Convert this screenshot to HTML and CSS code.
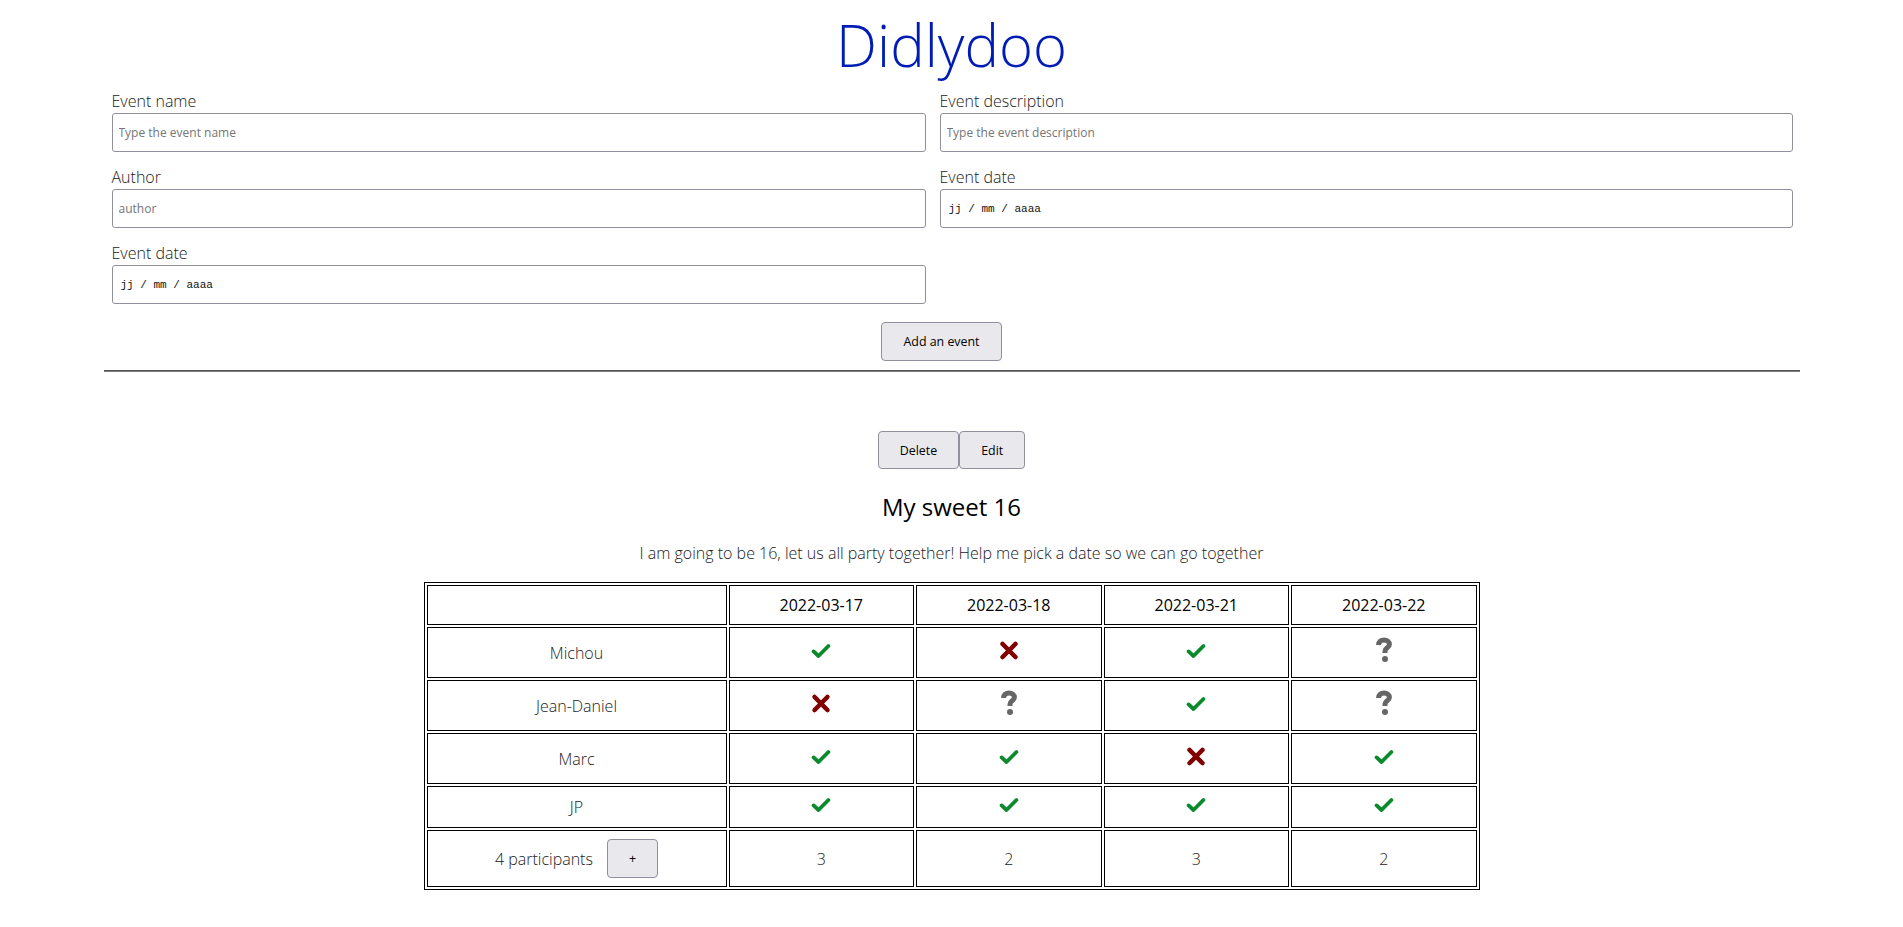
FILE: index.html
```html
<!DOCTYPE html>
<html lang="en">
<head>
<meta charset="utf-8">
<title>Didlydoo</title>
<link rel="stylesheet" href="styles.css">
</head>
<body>
<div class="page">
  <h1 class="title">Didlydoo</h1>
  <form class="event-form">
    <div class="fields">
      <div class="field">
        <label class="field-label">Event name</label>
        <input class="field-input" type="text" placeholder="Type the event name">
      </div>
      <div class="field">
        <label class="field-label">Event description</label>
        <input class="field-input" type="text" placeholder="Type the event description">
      </div>
      <div class="field">
        <label class="field-label">Author</label>
        <input class="field-input" type="text" placeholder="author">
      </div>
      <div class="field">
        <label class="field-label">Event date</label>
        <input class="field-input date-input" type="text" placeholder="jj / mm / aaaa">
      </div>
      <div class="field">
        <label class="field-label">Event date</label>
        <input class="field-input date-input" type="text" placeholder="jj / mm / aaaa">
      </div>
    </div>
    <div class="form-actions">
      <button type="button" class="btn btn-add">Add an event</button>
    </div>
  </form>
  <hr class="divider">
  <section class="event">
    <div class="event-actions">
      <button type="button" class="btn btn-small">Delete</button><button type="button" class="btn btn-small">Edit</button>
    </div>
    <h2 class="event-title">My sweet 16</h2>
    <p class="event-desc">I am going to be 16, let us all party together! Help me pick a date so we can go together</p>
    <table class="grid">
      <colgroup><col class="col-name"><col><col><col><col></colgroup>
      <thead>
        <tr><th></th><th>2022-03-17</th><th>2022-03-18</th><th>2022-03-21</th><th>2022-03-22</th></tr>
      </thead>
      <tbody>
        <tr>
          <td class="name">Michou</td>
          <td><svg class="ic ic-yes" width="20" height="24" viewBox="0 0 20 24"><path d="M2.6 10.4 L7.5 15 L17.4 5" /></svg></td>
          <td><svg class="ic ic-no" width="20" height="33" viewBox="0 0 20 33"><path d="M3.6 8 L16.4 21 M16.4 8 L3.6 21" /></svg></td>
          <td><svg class="ic ic-yes" width="20" height="24" viewBox="0 0 20 24"><path d="M2.6 10.4 L7.5 15 L17.4 5" /></svg></td>
          <td><svg class="ic ic-maybe" width="18" height="33" viewBox="0 0 18 33"><path d="M3.6 9 C3.6 5.5 6 4 9 4 C12 4 14.4 5.8 14.4 8.5 C14.4 11.5 10 12.1 10 15 L10 17" /><circle cx="10" cy="23.1" r="3" /></svg></td>
        </tr>
        <tr>
          <td class="name">Jean-Daniel</td>
          <td><svg class="ic ic-no" width="20" height="33" viewBox="0 0 20 33"><path d="M3.6 8 L16.4 21 M16.4 8 L3.6 21" /></svg></td>
          <td><svg class="ic ic-maybe" width="18" height="33" viewBox="0 0 18 33"><path d="M3.6 9 C3.6 5.5 6 4 9 4 C12 4 14.4 5.8 14.4 8.5 C14.4 11.5 10 12.1 10 15 L10 17" /><circle cx="10" cy="23.1" r="3" /></svg></td>
          <td><svg class="ic ic-yes" width="20" height="24" viewBox="0 0 20 24"><path d="M2.6 10.4 L7.5 15 L17.4 5" /></svg></td>
          <td><svg class="ic ic-maybe" width="18" height="33" viewBox="0 0 18 33"><path d="M3.6 9 C3.6 5.5 6 4 9 4 C12 4 14.4 5.8 14.4 8.5 C14.4 11.5 10 12.1 10 15 L10 17" /><circle cx="10" cy="23.1" r="3" /></svg></td>
        </tr>
        <tr>
          <td class="name">Marc</td>
          <td><svg class="ic ic-yes" width="20" height="24" viewBox="0 0 20 24"><path d="M2.6 10.4 L7.5 15 L17.4 5" /></svg></td>
          <td><svg class="ic ic-yes" width="20" height="24" viewBox="0 0 20 24"><path d="M2.6 10.4 L7.5 15 L17.4 5" /></svg></td>
          <td><svg class="ic ic-no" width="20" height="33" viewBox="0 0 20 33"><path d="M3.6 8 L16.4 21 M16.4 8 L3.6 21" /></svg></td>
          <td><svg class="ic ic-yes" width="20" height="24" viewBox="0 0 20 24"><path d="M2.6 10.4 L7.5 15 L17.4 5" /></svg></td>
        </tr>
        <tr>
          <td class="name">JP</td>
          <td><svg class="ic ic-yes" width="20" height="24" viewBox="0 0 20 24"><path d="M2.6 10.4 L7.5 15 L17.4 5" /></svg></td>
          <td><svg class="ic ic-yes" width="20" height="24" viewBox="0 0 20 24"><path d="M2.6 10.4 L7.5 15 L17.4 5" /></svg></td>
          <td><svg class="ic ic-yes" width="20" height="24" viewBox="0 0 20 24"><path d="M2.6 10.4 L7.5 15 L17.4 5" /></svg></td>
          <td><svg class="ic ic-yes" width="20" height="24" viewBox="0 0 20 24"><path d="M2.6 10.4 L7.5 15 L17.4 5" /></svg></td>
        </tr>
      </tbody>
      <tfoot>
        <tr>
          <td class="name"><span class="count">4 participants</span><button type="button" class="btn btn-plus">+</button></td>
          <td class="total">3</td>
          <td class="total">2</td>
          <td class="total">3</td>
          <td class="total">2</td>
        </tr>
      </tfoot>
    </table>
  </section>
</div>
</body>
</html>
```

FILE: styles.css
```css
html, body {
  margin: 0;
  padding: 0;
  background: #ffffff;
}

body {
  font-family: "Open Sans", "Noto Sans", sans-serif;
  color: #222222;
}

.page {
  width: 1696px;
  margin: 0 auto;
}

.title {
  margin: 0;
  padding-top: 9px;
  font-size: 58px;
  font-weight: 300;
  line-height: 72px;
  text-align: center;
  color: #001cb5;
}

.event-form {
  margin-top: 9px;
}

.fields {
  display: grid;
  grid-template-columns: 814px 853px;
  column-gap: 14px;
  row-gap: 14px;
  padding: 0 7px 0 8px;
}

.field {
  display: flex;
  flex-direction: column;
}

.field-label {
  font-size: 16px;
  font-weight: 300;
  line-height: 22px;
  margin-bottom: 1px;
  color: #1a1a1a;
}

.field-input {
  box-sizing: border-box;
  height: 39px;
  margin: 0;
  padding: 0 6px;
  border: 1px solid #8f8f9d;
  border-radius: 3px;
  font-family: "Open Sans", "Noto Sans", sans-serif;
  font-size: 12px;
  color: #222;
  background: #fff;
}

.field-input::placeholder {
  color: #757575;
}

.date-input {
  padding-left: 8px;
  font-family: "Liberation Mono", "DejaVu Sans Mono", monospace;
  font-size: 11px;
}

.date-input::placeholder {
  color: #111;
}

.form-actions {
  display: flex;
  justify-content: center;
  margin-top: 18px;
  padding-right: 20px;
}

.btn {
  box-sizing: border-box;
  height: 39px;
  margin: 0;
  padding: 0 21px;
  border: 1px solid #8f8f9d;
  border-radius: 4px;
  background: #e9e9ed;
  font-family: "Open Sans", "Noto Sans", sans-serif;
  font-size: 12.4px;
  color: #000;
}

.divider {
  margin: 9px 0 0 0;
  border: 0;
  border-top: 1px solid #555;
  border-bottom: 1px solid #7a7a7a;
  height: 0;
}

.event {
  display: flex;
  flex-direction: column;
  align-items: center;
}

.event-actions {
  display: flex;
  margin-top: 59px;
}

.btn-small {
  height: 38px;
}

.event-title {
  margin: 21px 0 0 0;
  font-size: 24px;
  font-weight: 400;
  line-height: 33px;
  color: #000;
}

.event-desc {
  margin: 19px 0 0 0;
  font-size: 16px;
  font-weight: 300;
  line-height: 22px;
  color: #1a1a1a;
}

.grid {
  margin-top: 18px;
  width: 1056px;
  table-layout: fixed;
  border: 1px solid #000;
  border-spacing: 2px;
}

.col-name {
  width: 300px;
}

.grid th,
.grid td {
  border: 1px solid #000;
  padding: 8px;
  text-align: center;
  vertical-align: middle;
  font-size: 16px;
  line-height: 22px;
}

.grid th {
  font-weight: 400;
  color: #000;
}

.grid td {
  font-weight: 300;
  color: #222;
}

.ic {
  display: block;
  margin: 0 auto;
}

.ic-yes path {
  fill: none;
  stroke: #0b8a2c;
  stroke-width: 3.8;
  stroke-linecap: round;
  stroke-linejoin: round;
}

.ic-no path {
  fill: none;
  stroke: #800000;
  stroke-width: 4.6;
  stroke-linecap: round;
}

.ic-maybe path {
  fill: none;
  stroke: #666666;
  stroke-width: 5;
  stroke-linecap: butt;
  stroke-linejoin: round;
}

.ic-maybe circle {
  fill: #666666;
}

.btn-plus {
  height: 39px;
  margin-left: 14px;
  vertical-align: middle;
}

.count {
  vertical-align: middle;
}
```
